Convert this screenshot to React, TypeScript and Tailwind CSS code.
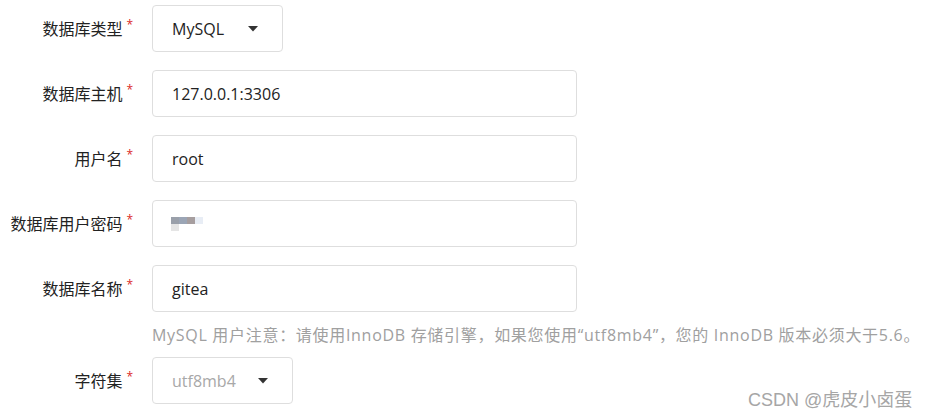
const font = { fontFamily: '"Open Sans", "Noto Sans CJK SC", sans-serif' };

const Label = ({ text }: { text: string }) => (
  <div className="w-[133px] shrink-0 flex justify-end items-center text-[16px] text-[#222]">
    <span>{text}</span>
    <span className="self-start mt-[2px] ml-[4px] text-[#db2828] text-[12px] leading-none">*</span>
  </div>
);

const Caret = () => (
  <svg width="10" height="6" viewBox="0 0 10 6" className="shrink-0">
    <path d="M0 0h10L5 5.5z" fill="#333" />
  </svg>
);

const TextInput = ({ value }: { value: string }) => (
  <div className="w-[425px] h-[47px] border border-[#dedede] rounded-[4px] flex items-center pl-[19px] text-[16px] text-[#222]">
    {value}
  </div>
);

export default function App() {
  return (
    <div className="w-[933px] h-[420px] bg-white relative overflow-hidden" style={font}>
      <div className="flex flex-col pt-[5px] gap-[18px]">
        <div className="flex items-center gap-[19px]">
          <Label text="数据库类型" />
          <div className="w-[131px] h-[47px] border border-[#dedede] rounded-[4px] flex items-center justify-between pl-[19px] pr-[24px] text-[16px] text-[#222]">
            <span>MySQL</span>
            <Caret />
          </div>
        </div>
        <div className="flex items-center gap-[19px]">
          <Label text="数据库主机" />
          <TextInput value="127.0.0.1:3306" />
        </div>
        <div className="flex items-center gap-[19px]">
          <Label text="用户名" />
          <TextInput value="root" />
        </div>
        <div className="flex items-center gap-[19px]">
          <Label text="数据库用户密码" />
          <div className="w-[425px] h-[47px] border border-[#dedede] rounded-[4px] flex flex-col justify-center pl-[18px]">
            <div className="flex">
              <div className="w-[8px] h-[7px] bg-[#9aa0aa]" />
              <div className="w-[8px] h-[7px] bg-[#9ba5b5]" />
              <div className="w-[8px] h-[7px] bg-[#a69e9f]" />
              <div className="w-[8px] h-[7px] bg-[#e8edf5]" />
            </div>
            <div className="w-[8px] h-[7px] bg-[#e5e5e5]" />
          </div>
        </div>
        <div className="flex flex-col">
          <div className="flex items-center gap-[19px]">
            <Label text="数据库名称" />
            <TextInput value="gitea" />
          </div>
          <div className="pl-[152px] h-[45px] flex items-center text-[16px] tracking-[0.7px] text-[#a0a0a0] whitespace-nowrap">
            MySQL 用户注意：请使用InnoDB 存储引擎，如果您使用“utf8mb4”，您的 InnoDB 版本必须大于5.6。
          </div>
          <div className="flex items-center gap-[19px]">
            <Label text="字符集" />
            <div className="w-[141px] h-[47px] border border-[#dedede] rounded-[4px] flex items-center justify-between pl-[19px] pr-[24px] text-[16px] text-[#a8a8a8]">
              <span>utf8mb4</span>
              <Caret />
            </div>
          </div>
        </div>
      </div>
      <div
        className="absolute left-[748px] top-[387px] text-[18px] text-[#a6a6a6]"
        style={{ fontFamily: '"Liberation Sans", "Noto Sans CJK SC", sans-serif' }}
      >
        CSDN @虎皮小卤蛋
      </div>
    </div>
  );
}
